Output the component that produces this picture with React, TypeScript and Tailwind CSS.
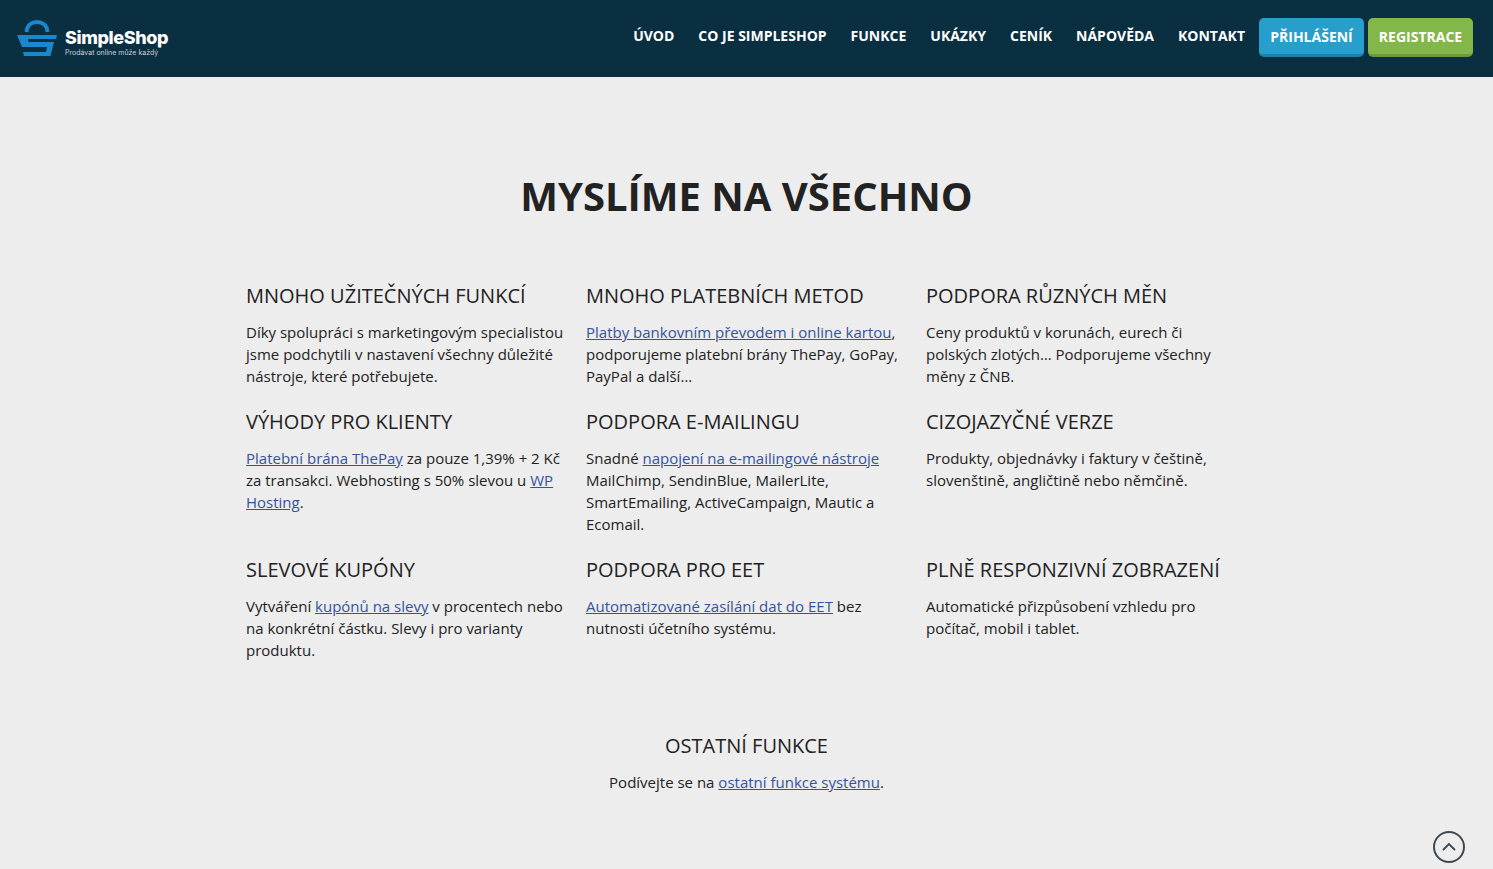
const linkClass = 'text-[#34539b] underline'

const Feature = ({ title, children }: { title: string; children: React.ReactNode }) => (
  <div className="pb-[20px] pl-[15px] pr-[2px]">
    <h3 className="mb-[10px] text-[20px] leading-[30px] text-[#222]">{title}</h3>
    <p className="max-w-[319px] text-[15px] leading-[22px] text-[#222]">{children}</p>
  </div>
)

const Logo = () => (
  <div className="flex items-center">
    <svg width="40" height="37" viewBox="0 0 40 37" fill="none">
      <path d="M9.500 12 C10 5 15 2 20 2 C25 2 30 5 30.500 12" stroke="#1b87cc" strokeWidth="4" fill="none" />
      <path d="M0 15 H40 L39 19 H11 L11.500 22 H37 L33.500 36 H7 L6 32 H29 L30 27 H5 Z" fill="#1b87cc" />
    </svg>
    <div className="ml-[8px] mt-[8px] flex flex-col">
      <span className="font-['Inter',sans-serif] text-[18px] font-extrabold leading-[20px] tracking-[-0.4px] text-white">SimpleShop</span>
      <span className="mt-[1px] font-['Inter',sans-serif] text-[7px] leading-[8px] text-[#c9d2d8]">Prodávat online může každý</span>
    </div>
  </div>
)

export default function App() {
  const nav = ['ÚVOD', 'CO JE SIMPLESHOP', 'FUNKCE', 'UKÁZKY', 'CENÍK', 'NÁPOVĚDA', 'KONTAKT']
  return (
    <div className="relative min-h-[869px] overflow-hidden bg-[#ededed] font-['Open_Sans',sans-serif]">
      <header className="flex h-[77px] items-center justify-between bg-[#0a2f41] pl-[17px] pr-[20px]">
        <Logo />
        <nav className="mb-[2px] flex items-center">
          <div className="mr-[14px] flex gap-[24px]">
            {nav.map((item) => (
              <a key={item} className="pb-[5px] text-[14px] font-bold text-white">
                {item}
              </a>
            ))}
          </div>
          <a className="mr-[4px] flex h-[39px] w-[105px] items-center justify-center rounded-[5px] border-b-[3px] border-[#217fa8] bg-[#279ecb] text-[14px] font-bold text-white">
            PŘIHLÁŠENÍ
          </a>
          <a className="flex h-[39px] w-[105px] items-center justify-center rounded-[5px] border-b-[3px] border-[#6d9a3c] bg-[#84b749] text-[14px] font-bold text-white">
            REGISTRACE
          </a>
        </nav>
      </header>

      <main className="pt-[90px]">
        <h1 className="mb-[56px] text-center text-[40px] font-bold leading-[58px] text-[#222]">MYSLÍME NA VŠECHNO</h1>
        <div className="ml-[231px] grid w-[1020px] grid-cols-3">
          <Feature title="MNOHO UŽITEČNÝCH FUNKCÍ">
            Díky spolupráci s marketingovým specialistou jsme podchytili v nastavení všechny důležité nástroje, které potřebujete.
          </Feature>
          <Feature title="MNOHO PLATEBNÍCH METOD">
            <a className={linkClass}>Platby bankovním převodem i online kartou</a>, podporujeme platební brány ThePay, GoPay, PayPal a další…
          </Feature>
          <Feature title="PODPORA RŮZNÝCH MĚN">
            Ceny produktů v korunách, eurech či polských zlotých… Podporujeme všechny měny z ČNB.
          </Feature>
          <Feature title="VÝHODY PRO KLIENTY">
            <a className={linkClass}>Platební brána ThePay</a> za pouze 1,39% + 2 Kč za transakci. Webhosting s 50% slevou u <a className={linkClass}>WP Hosting</a>.
          </Feature>
          <Feature title="PODPORA E-MAILINGU">
            Snadné <a className={linkClass}>napojení na e-mailingové nástroje</a> MailChimp, SendinBlue, MailerLite, SmartEmailing, ActiveCampaign, Mautic a Ecomail.
          </Feature>
          <Feature title="CIZOJAZYČNÉ VERZE">
            Produkty, objednávky i faktury v češtině, slovenštině, angličtině nebo němčině.
          </Feature>
          <Feature title="SLEVOVÉ KUPÓNY">
            Vytváření <a className={linkClass}>kupónů na slevy</a> v procentech nebo na konkrétní částku. Slevy i pro varianty produktu.
          </Feature>
          <Feature title="PODPORA PRO EET">
            <a className={linkClass}>Automatizované zasílání dat do EET</a> bez nutnosti účetního systému.
          </Feature>
          <Feature title="PLNĚ RESPONZIVNÍ ZOBRAZENÍ">
            Automatické přizpůsobení vzhledu pro počítač, mobil i tablet.
          </Feature>
        </div>
        <div className="mt-[50px] text-center">
          <h3 className="mb-[10px] text-[20px] leading-[30px] text-[#222]">OSTATNÍ FUNKCE</h3>
          <p className="text-[15px] leading-[22px] text-[#222]">
            Podívejte se na <a className={linkClass}>ostatní funkce systému</a>.
          </p>
        </div>
      </main>

      <a className="absolute bottom-[6px] right-[28px] flex h-[32px] w-[32px] items-center justify-center rounded-full border-2 border-[#3d4852]">
        <svg width="16" height="10" viewBox="0 0 16 10" fill="none">
          <path d="M2 8 L8 2 L14 8" stroke="#3d4852" strokeWidth="1.8" />
        </svg>
      </a>
    </div>
  )
}
